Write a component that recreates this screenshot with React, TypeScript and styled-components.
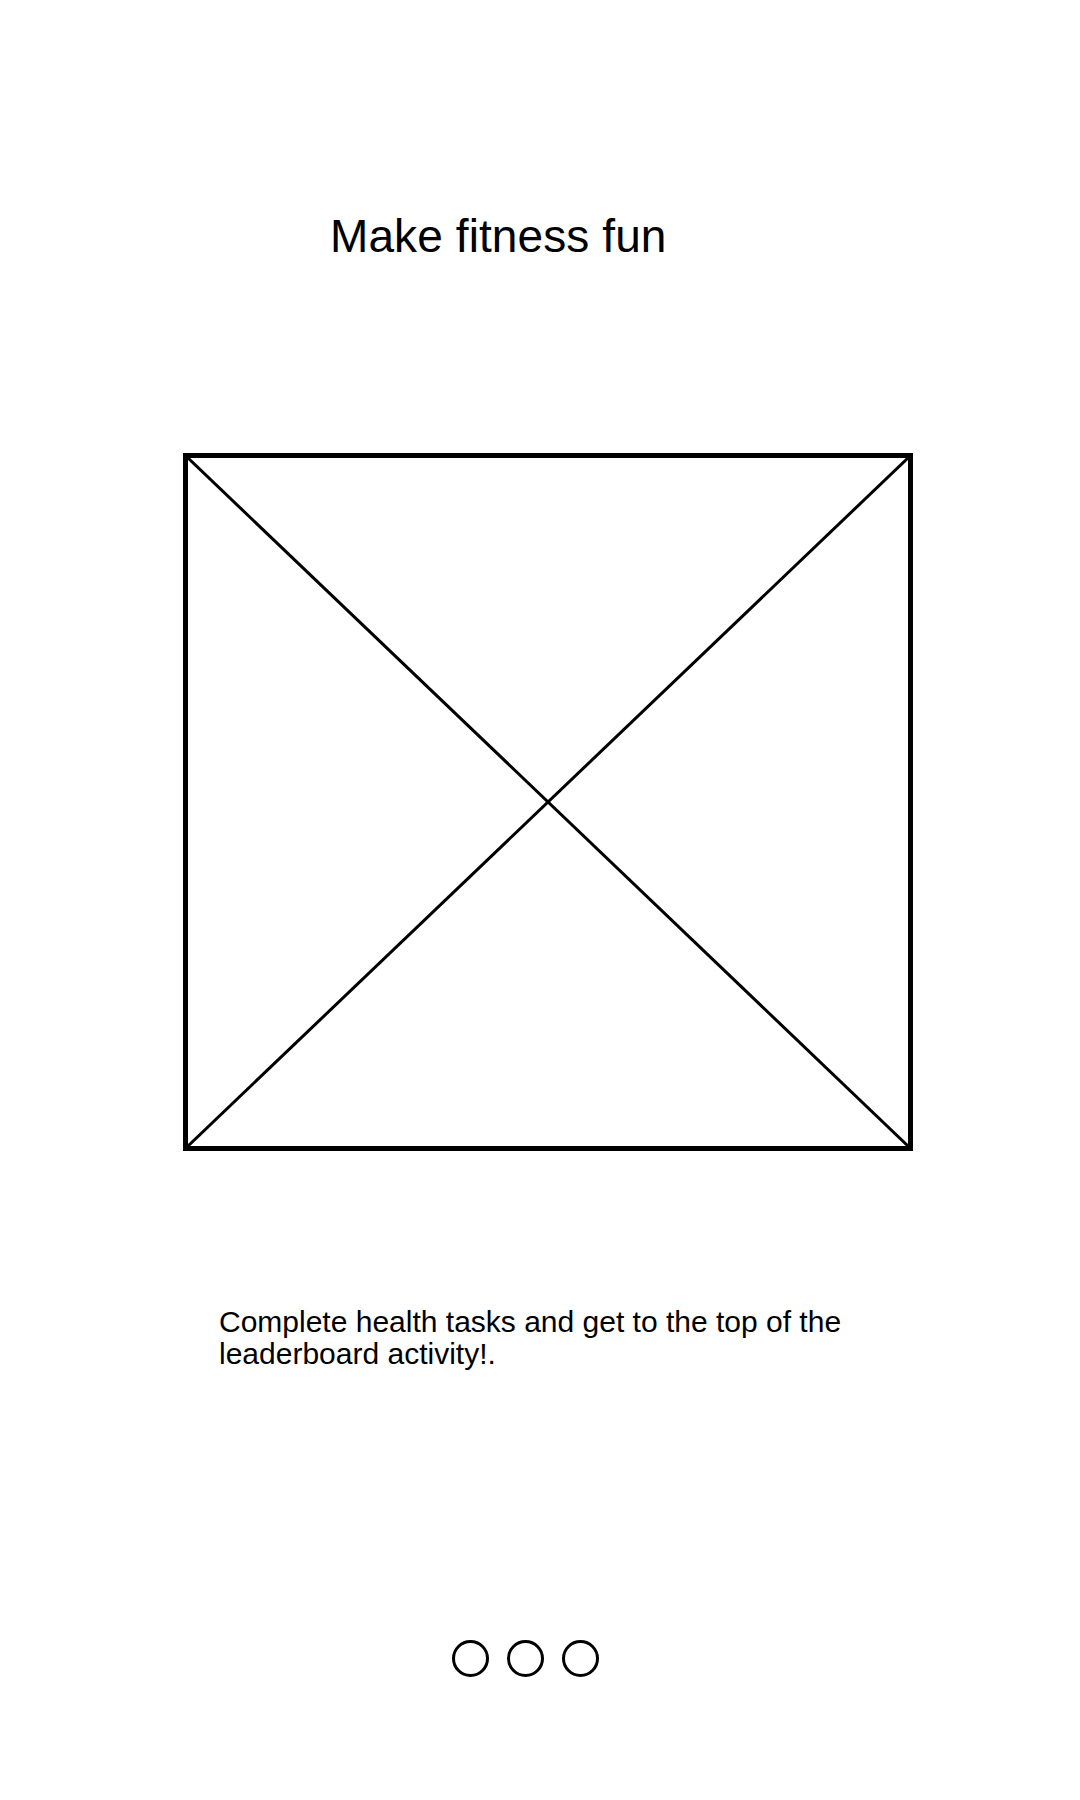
import React from "react";
import styled, { createGlobalStyle } from "styled-components";

const GlobalStyle = createGlobalStyle`
  html, body {
    margin: 0;
    padding: 0;
    background: #ffffff;
  }
  body {
    font-family: "Liberation Sans", Arial, sans-serif;
    color: #000000;
  }
`;

const Page = styled.main`
  width: 1080px;
  min-height: 1800px;
  box-sizing: border-box;
  padding-top: 210px;
  display: flex;
  flex-direction: column;
  align-items: flex-start;
  background: #ffffff;
`;

const Title = styled.h1`
  margin: 0 0 0 330px;
  font-size: 46px;
  line-height: 52px;
  font-weight: 400;
  letter-spacing: 0.1px;
  color: #000;
  white-space: nowrap;
`;

const Frame = styled.div`
  margin: 191px 0 0 183px;
  width: 730px;
  height: 698px;
  box-sizing: border-box;
  border: 5px solid #000;
  display: flex;
`;

const Cross = styled.svg`
  display: block;
  width: 100%;
  height: 100%;
`;

const Caption = styled.p`
  margin: 155px 0 0 219px;
  max-width: 660px;
  font-size: 30px;
  line-height: 32px;
  color: #000;
`;

const Dots = styled.div`
  margin: 270px 0 0 452px;
  display: flex;
  gap: 18px;
`;

const Dot = styled.span<{ $active?: boolean }>`
  width: 37px;
  height: 37px;
  box-sizing: border-box;
  border: 3px solid #000;
  border-radius: 50%;
  background: ${(p) => (p.$active ? "#000" : "transparent")};
`;

export default function App() {
  return (
    <>
      <GlobalStyle />
      <Page>
        <Title>Make fitness fun</Title>
        <Frame>
          <Cross viewBox="0 0 720 688" preserveAspectRatio="none">
            <line x1="0" y1="0" x2="720" y2="688" stroke="#000" strokeWidth="3" />
            <line x1="720" y1="0" x2="0" y2="688" stroke="#000" strokeWidth="3" />
          </Cross>
        </Frame>
        <Caption>
          Complete health tasks and get to the top of the leaderboard activity!.
        </Caption>
        <Dots>
          <Dot />
          <Dot />
          <Dot />
        </Dots>
      </Page>
    </>
  );
}
